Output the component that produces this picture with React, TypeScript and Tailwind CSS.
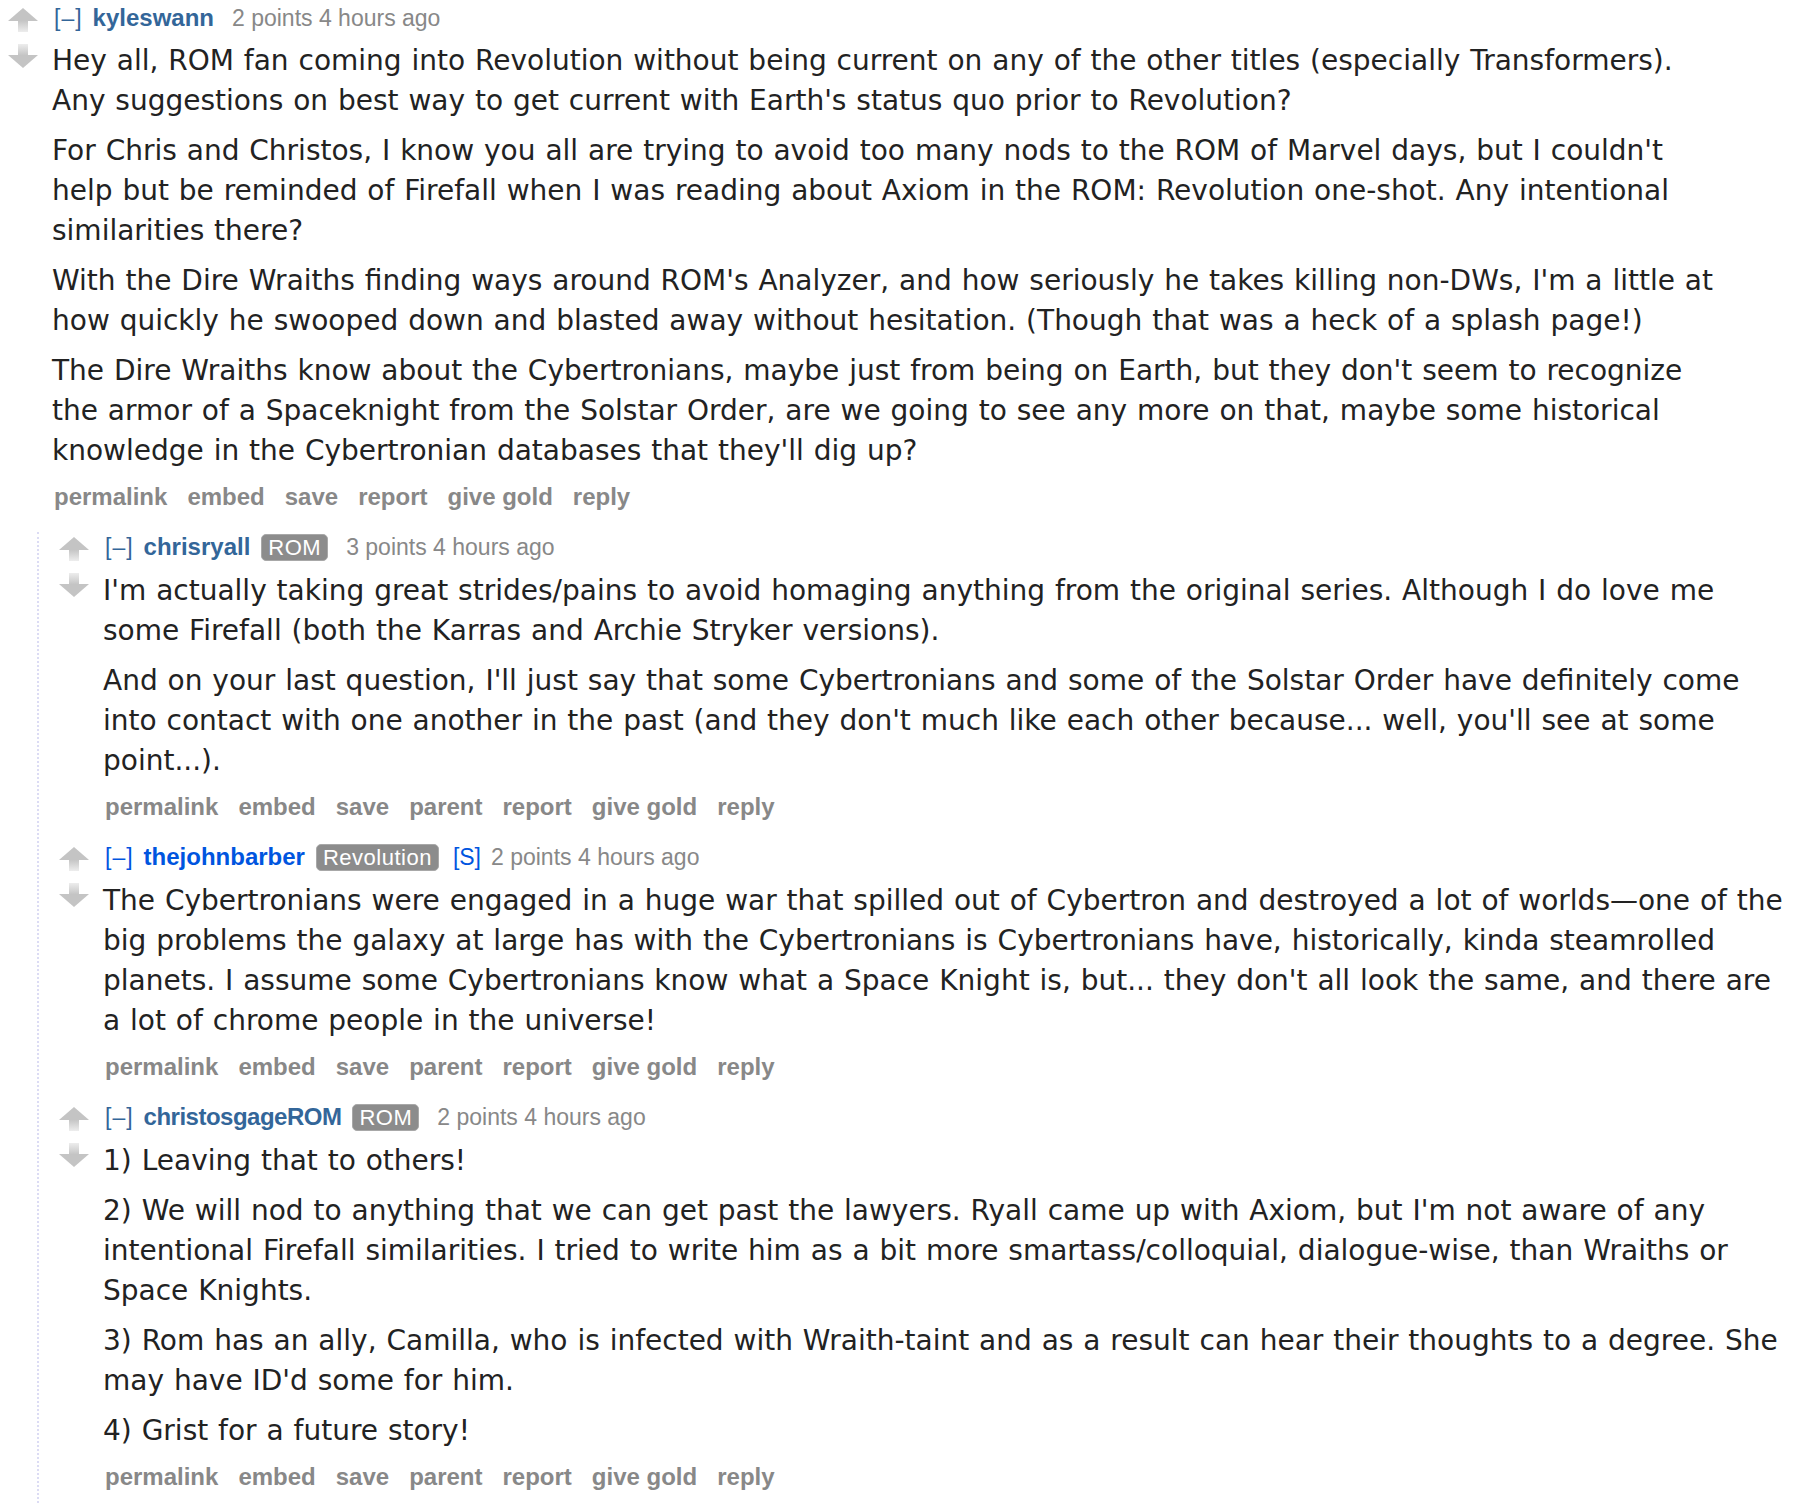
import React from "react";

const TAG = { fontFamily: '"Liberation Sans", Arial, sans-serif' };
const BODY = { fontFamily: '"DejaVu Sans", Verdana, sans-serif' };

function UpArrow() {
  return (
    <svg width="30" height="24" viewBox="0 0 30 24" className="block">
      <defs>
        <linearGradient id="upStem" x1="0" y1="0" x2="0" y2="1">
          <stop offset="0" stopColor="#c4c4c4" />
          <stop offset="1" stopColor="#ededed" />
        </linearGradient>
      </defs>
      <polygon points="0,13 15,0 30,13" fill="#c4c4c4" />
      <rect x="10" y="12.5" width="10" height="11.5" fill="url(#upStem)" />
    </svg>
  );
}

function DownArrow() {
  return (
    <svg width="30" height="24" viewBox="0 0 30 24" className="block">
      <defs>
        <linearGradient id="downStem" x1="0" y1="1" x2="0" y2="0">
          <stop offset="0" stopColor="#c4c4c4" />
          <stop offset="1" stopColor="#ededed" />
        </linearGradient>
      </defs>
      <rect x="10" y="0" width="10" height="11.5" fill="url(#downStem)" />
      <polygon points="0,11 30,11 15,24" fill="#c4c4c4" />
    </svg>
  );
}

function Flair({ text }: { text: string }) {
  return (
    <span
      className="inline-flex items-center h-[27px] px-[6px] rounded-[5px] bg-[#8c8c8c] border border-[#a8a8a8] text-white text-[22px] leading-none tracking-[0.5px]"
      style={TAG}
    >
      {text}
    </span>
  );
}

type CommentProps = {
  author: string;
  submitter?: boolean;
  flair?: string;
  points: string;
  paras: string[][];
  parent?: boolean;
  tight?: boolean;
};

function Comment({ author, submitter, flair, points, paras, parent, tight }: CommentProps) {
  const authorColor = submitter ? "text-[#0055df]" : "text-[#336699]";
  const buttons = parent
    ? ["permalink", "embed", "save", "parent", "report", "give gold", "reply"]
    : ["permalink", "embed", "save", "report", "give gold", "reply"];
  return (
    <div className="flex">
      <div className={`w-[30px] shrink-0 flex flex-col items-center ${flair ? "pt-[5px]" : "pt-[4px]"}`}>
        <UpArrow />
        <div className="h-[12px]" />
        <DownArrow />
      </div>
      <div className="ml-[14px] flex flex-col">
        <div
          className={`ml-[2px] flex items-center ${flair ? "h-[30px]" : "h-[28px]"} text-[23px] text-[#888]`}
          style={TAG}
        >
          <span className={`tracking-[1px] ${submitter ? "text-[#0055df]" : "text-[#336699]"}`}>[–]</span>
          <span
            className={`ml-[10px] text-[24px] font-bold ${authorColor} ${tight ? "tracking-[-0.5px]" : ""}`}
          >
            {author}
          </span>
          {flair ? (
            <span className="ml-[11px]">
              <Flair text={flair} />
            </span>
          ) : null}
          {submitter ? (
            <span className="ml-[14px] text-[#0055df]">[S]</span>
          ) : null}
          <span className={submitter ? "ml-[10px]" : "ml-[18px]"}>{points}</span>
        </div>
        <div
          className="mt-[9px] flex flex-col gap-[10px] text-[28px] leading-[40px] text-[#222] whitespace-nowrap [word-spacing:1px]"
          style={BODY}
        >
          {paras.map((lines, i) => (
            <p key={i}>
              {lines.map((l, j) => (
                <React.Fragment key={j}>
                  {j > 0 ? <br /> : null}
                  {l}
                </React.Fragment>
              ))}
            </p>
          ))}
        </div>
        <div
          className="ml-[2px] mt-[12px] flex items-center h-[28px] gap-[20px] text-[24px] font-bold text-[#888]"
          style={TAG}
        >
          {buttons.map((b) => (
            <span key={b}>{b}</span>
          ))}
        </div>
      </div>
    </div>
  );
}

export default function App() {
  return (
    <div className="w-[1806px] h-[1504px] bg-white overflow-hidden">
      <div className="pl-[8px] pt-[4px]">
        <Comment
          author="kyleswann"
          points="2 points 4 hours ago"
          paras={[
            [
              "Hey all, ROM fan coming into Revolution without being current on any of the other titles (especially Transformers).",
              "Any suggestions on best way to get current with Earth's status quo prior to Revolution?",
            ],
            [
              "For Chris and Christos, I know you all are trying to avoid too many nods to the ROM of Marvel days, but I couldn't",
              "help but be reminded of Firefall when I was reading about Axiom in the ROM: Revolution one-shot. Any intentional",
              "similarities there?",
            ],
            [
              "With the Dire Wraiths finding ways around ROM's Analyzer, and how seriously he takes killing non-DWs, I'm a little at",
              "how quickly he swooped down and blasted away without hesitation. (Though that was a heck of a splash page!)",
            ],
            [
              "The Dire Wraiths know about the Cybertronians, maybe just from being on Earth, but they don't seem to recognize",
              "the armor of a Spaceknight from the Solstar Order, are we going to see any more on that, maybe some historical",
              "knowledge in the Cybertronian databases that they'll dig up?",
            ],
          ]}
        />
        <div className="ml-[29px] mt-[21px] border-l-2 border-dotted border-[#dcdcf4] pl-[20px] flex flex-col gap-[21px] pb-[40px]">
          <Comment
            author="chrisryall"
            flair="ROM"
            points="3 points 4 hours ago"
            parent
            paras={[
              [
                "I'm actually taking great strides/pains to avoid homaging anything from the original series. Although I do love me",
                "some Firefall (both the Karras and Archie Stryker versions).",
              ],
              [
                "And on your last question, I'll just say that some Cybertronians and some of the Solstar Order have definitely come",
                "into contact with one another in the past (and they don't much like each other because... well, you'll see at some",
                "point...).",
              ],
            ]}
          />
          <Comment
            author="thejohnbarber"
            flair="Revolution"
            submitter
            points="2 points 4 hours ago"
            parent
            paras={[
              [
                "The Cybertronians were engaged in a huge war that spilled out of Cybertron and destroyed a lot of worlds\u2014one of the",
                "big problems the galaxy at large has with the Cybertronians is Cybertronians have, historically, kinda steamrolled",
                "planets. I assume some Cybertronians know what a Space Knight is, but... they don't all look the same, and there are",
                "a lot of chrome people in the universe!",
              ],
            ]}
          />
          <Comment
            author="christosgageROM"
            flair="ROM"
            points="2 points 4 hours ago"
            parent
            tight
            paras={[
              ["1) Leaving that to others!"],
              [
                "2) We will nod to anything that we can get past the lawyers. Ryall came up with Axiom, but I'm not aware of any",
                "intentional Firefall similarities. I tried to write him as a bit more smartass/colloquial, dialogue-wise, than Wraiths or",
                "Space Knights.",
              ],
              [
                "3) Rom has an ally, Camilla, who is infected with Wraith-taint and as a result can hear their thoughts to a degree. She",
                "may have ID'd some for him.",
              ],
              ["4) Grist for a future story!"],
            ]}
          />
        </div>
      </div>
    </div>
  );
}
